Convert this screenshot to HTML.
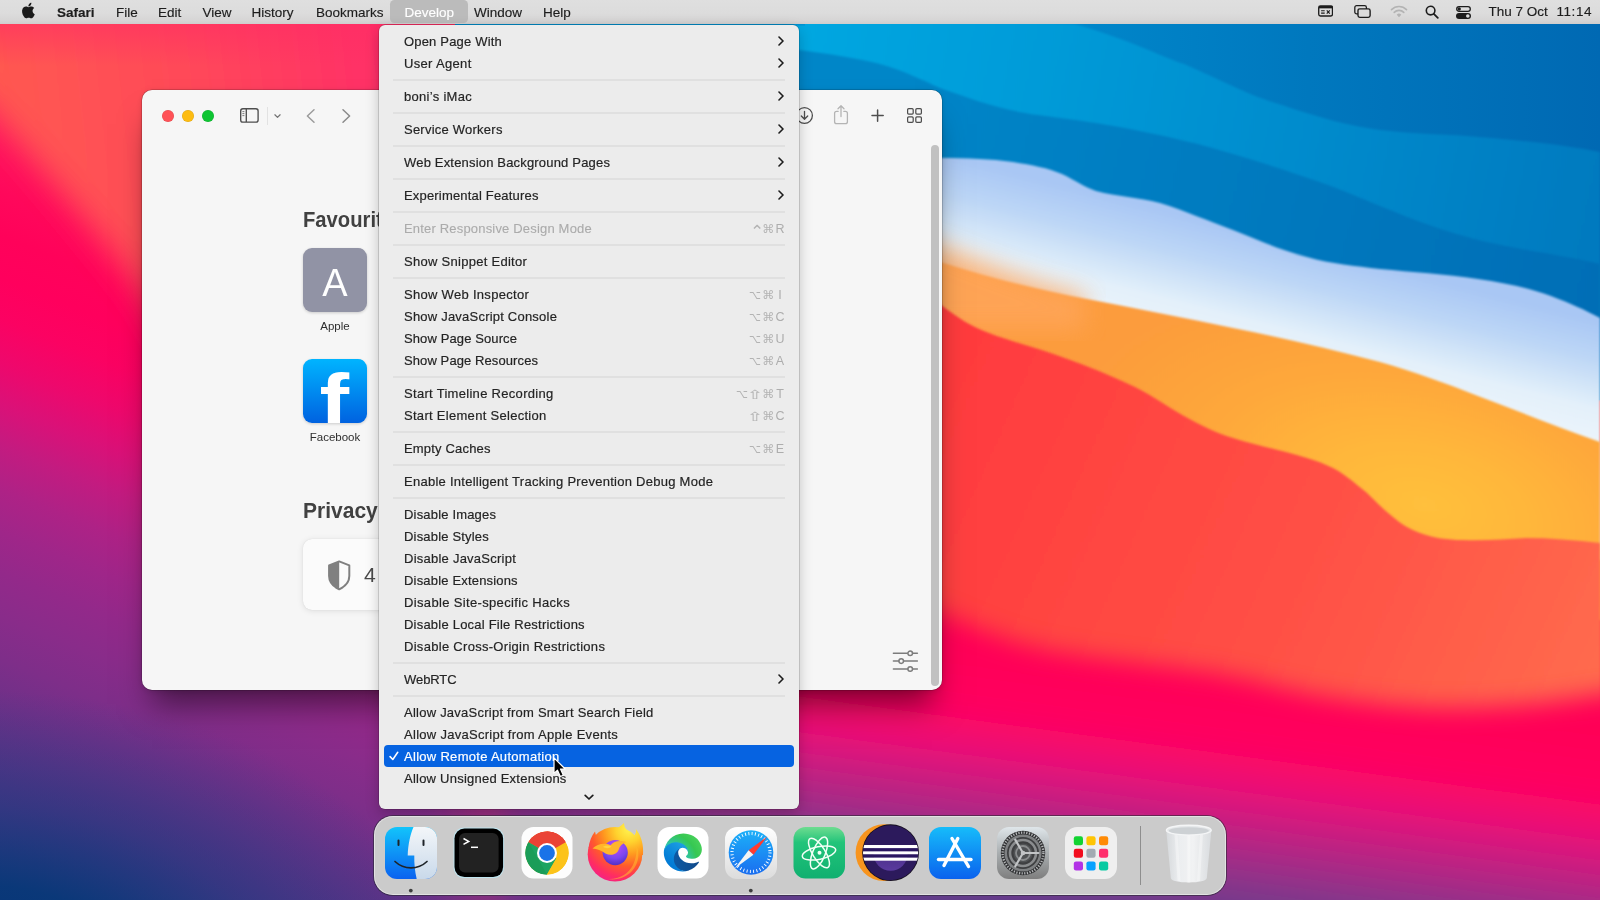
<!DOCTYPE html>
<html lang="en">
<head>
<meta charset="utf-8">
<title>Safari — Develop menu</title>
<style>
*{box-sizing:border-box;margin:0;padding:0}
html,body{width:1600px;height:900px;overflow:hidden;background:#ff3050}
body{position:relative;font-family:"Liberation Sans",sans-serif;font-size:13px;color:#262626;-webkit-font-smoothing:antialiased}
#wall{position:absolute;left:0;top:0;width:1600px;height:900px;display:block}
/* ---------- menu bar ---------- */
#menubar{will-change:transform;position:absolute;left:0;top:0;width:1600px;height:24px;background:linear-gradient(#dfdfdf 0,#dcdcdc 55%,#d6d5d5 85%,#cfcdcd 100%);}
#menubar .mi{position:absolute;top:0;height:24px;line-height:25.5px;font-size:13.5px;color:#1d1d1d;white-space:nowrap;-webkit-text-stroke:.15px #1d1d1d}
#menubar .mi.b{font-weight:bold}
#menubar .hl{position:absolute;left:390px;top:0;width:78px;height:23.4px;background:#bbbbbb;border-radius:4.5px}
#menubar svg{position:absolute}
/* ---------- safari window ---------- */
#win{will-change:transform;position:absolute;left:142px;top:90px;width:800px;height:600px;background:#f6f6f6;border-radius:10px;box-shadow:0 0 0 0.5px rgba(0,0,0,.30),0 24px 30px -10px rgba(0,0,0,.5),0 1px 7px rgba(0,0,0,.13);overflow:hidden}
#win .tl{position:absolute;top:20px;width:12px;height:12px;border-radius:50%}
#win svg{position:absolute}
#win h2{position:absolute;left:161px;font-size:22.6px;line-height:28px;font-weight:bold;color:#414141;white-space:nowrap;transform:scaleX(.895);transform-origin:0 50%}
#win .lbl{position:absolute;font-size:11.5px;color:#2e2e2e;text-align:center;width:90px;white-space:nowrap}
/* ---------- develop menu ---------- */
#menu{will-change:transform;position:absolute;left:379px;top:25px;width:420px;height:784px;background:#ececec;border-radius:6px;box-shadow:0 0 0 0.5px rgba(0,0,0,.28),0 5px 14px rgba(0,0,0,.22);padding-top:5px}
#menu .it{position:relative;height:22px;line-height:24.2px;padding-left:25px;font-size:13px;color:#242424;-webkit-text-stroke:.18px #242424;white-space:nowrap;letter-spacing:.18px}
#menu .it.dis{color:#ababab;-webkit-text-stroke:.1px #ababab}
#menu .it .sc{position:absolute;right:14px;top:0;height:22px;line-height:25.4px;color:#adadad;font-size:12.5px;white-space:nowrap;display:flex;letter-spacing:0;-webkit-text-stroke:0}
#menu .it .sc i{display:block;width:13.5px;text-align:center;font-style:normal;font-family:"DejaVu Sans",sans-serif;font-size:12px;color:#b3b3b3}
#menu .it .sc i.o{transform:scaleX(.86)}
#menu .it .sc i.s{transform:scaleX(1.6);font-size:12.5px}
#menu .it .sc i.c{font-size:17px;line-height:29px;transform:translateX(2px)}
#menu .it .sc b{display:block;width:10px;text-align:center;font-weight:normal;font-size:12.5px}
#menu .it .ar{position:absolute;right:15px;top:6px;width:6px;height:10px}
#menu .ck{position:absolute;left:4.6px;top:6.2px;width:10px;height:10px}
#menu .more{position:absolute;left:204.5px;top:768.5px;width:10px;height:7px}
#menu .sep{height:11px;position:relative}
#menu .sep:after{content:"";position:absolute;left:14px;right:14px;top:5px;height:2px;background:#e0e0e0}
#menu .it.sel{background:#0663e1;color:#fff;-webkit-text-stroke:.18px #fff;margin:0 5px;padding-left:20px;border-radius:4px}
/* ---------- dock ---------- */
#dock{position:absolute;left:374px;top:816px;width:852px;height:79px;background:#cbcbcb;border-radius:19px;box-shadow:0 0 0 1px rgba(40,40,50,.6), inset 0 0 0 1px rgba(255,255,255,.45)}
</style>
</head>
<body>
<svg id="wall" viewBox="0 0 1600 900" width="1600" height="900" preserveAspectRatio="none">
<defs>
  <linearGradient id="gBlueBack" gradientUnits="userSpaceOnUse" x1="560" y1="0" x2="1600" y2="0">
    <stop offset="0" stop-color="#0096d6"/><stop offset=".5" stop-color="#0086ca"/><stop offset=".72" stop-color="#0078be"/><stop offset="1" stop-color="#0069b3"/>
  </linearGradient>
  <linearGradient id="gBlueA" gradientUnits="userSpaceOnUse" x1="800" y1="40" x2="1600" y2="200">
    <stop offset="0" stop-color="#00a7e1"/><stop offset=".3" stop-color="#009bd8"/><stop offset=".62" stop-color="#008ccd"/><stop offset="1" stop-color="#007abf"/>
  </linearGradient>
  <linearGradient id="gBlueC" gradientUnits="userSpaceOnUse" x1="900" y1="110" x2="1600" y2="290">
    <stop offset="0" stop-color="#0086c8"/><stop offset=".55" stop-color="#0079be"/><stop offset="1" stop-color="#006eb6"/>
  </linearGradient>
  <linearGradient id="gWhite" gradientUnits="userSpaceOnUse" x1="1270" y1="238" x2="1240" y2="356">
    <stop offset="0" stop-color="#a9c7f4"/><stop offset=".3" stop-color="#bcd6f6"/><stop offset=".7" stop-color="#e3f0fa"/><stop offset="1" stop-color="#ecf5fb"/>
  </linearGradient>
  <radialGradient id="gOrange" gradientUnits="userSpaceOnUse" cx="1425" cy="505" r="370" gradientTransform="translate(1425 505) rotate(14) scale(1 .55) rotate(-14) translate(-1425 -505)">
    <stop offset="0" stop-color="#ffc03c"/><stop offset=".3" stop-color="#ffb63a"/><stop offset=".6" stop-color="#fea83a"/><stop offset="1" stop-color="#fc9c3c"/>
  </radialGradient>
  <linearGradient id="gRed" gradientUnits="userSpaceOnUse" x1="0" y1="300" x2="0" y2="900">
    <stop offset="0" stop-color="#ff3d3e"/>
    <stop offset=".25" stop-color="#ff4842"/>
    <stop offset=".5" stop-color="#ff5046"/>
    <stop offset=".68" stop-color="#ff4c46"/>
    <stop offset="1" stop-color="#ff2a4c"/>
  </linearGradient>
  <linearGradient id="gRed2" gradientUnits="userSpaceOnUse" x1="940" y1="360" x2="1600" y2="650">
    <stop offset="0" stop-color="#ff3a3e"/><stop offset=".3" stop-color="#ff4642"/><stop offset=".62" stop-color="#ff5246"/><stop offset="1" stop-color="#ff6a4e"/>
  </linearGradient>
  <linearGradient id="gPink" gradientUnits="userSpaceOnUse" x1="1000" y1="600" x2="959.5" y2="900"><stop offset="0.000" stop-color="#ff0654"/><stop offset="0.040" stop-color="#ff0655"/><stop offset="0.083" stop-color="#ff0555"/><stop offset="0.125" stop-color="#ff0556"/><stop offset="0.165" stop-color="#ff0457"/><stop offset="0.208" stop-color="#ff0458"/><stop offset="0.250" stop-color="#ff045a"/><stop offset="0.290" stop-color="#ff045c"/><stop offset="0.333" stop-color="#ff045e"/><stop offset="0.375" stop-color="#fd0561"/><stop offset="0.415" stop-color="#f90767"/><stop offset="0.458" stop-color="#f20b6f"/><stop offset="0.500" stop-color="#ea0f76"/><stop offset="0.540" stop-color="#e1137b"/><stop offset="0.583" stop-color="#d4187e"/><stop offset="0.625" stop-color="#c81e80"/><stop offset="0.665" stop-color="#bb2383"/><stop offset="0.708" stop-color="#ae2885"/><stop offset="0.750" stop-color="#a02d87"/><stop offset="0.790" stop-color="#933189"/><stop offset="0.833" stop-color="#85368a"/><stop offset="0.875" stop-color="#79398b"/><stop offset="0.915" stop-color="#703b8b"/><stop offset="0.958" stop-color="#673b8b"/><stop offset="1.000" stop-color="#603c8a"/></linearGradient>
  <linearGradient id="gLeft" gradientUnits="userSpaceOnUse" x1="0" y1="24" x2="-350" y2="900"><stop offset="0.000" stop-color="#ff2c65"/><stop offset="0.040" stop-color="#ff2563"/><stop offset="0.083" stop-color="#ff1b60"/><stop offset="0.125" stop-color="#ff115d"/><stop offset="0.165" stop-color="#ff085b"/><stop offset="0.208" stop-color="#ff025a"/><stop offset="0.250" stop-color="#ff005d"/><stop offset="0.290" stop-color="#fb0262"/><stop offset="0.333" stop-color="#ee086c"/><stop offset="0.375" stop-color="#da1178"/><stop offset="0.415" stop-color="#c31b80"/><stop offset="0.458" stop-color="#ae2286"/><stop offset="0.500" stop-color="#9f2689"/><stop offset="0.540" stop-color="#93298a"/><stop offset="0.583" stop-color="#892c8a"/><stop offset="0.625" stop-color="#7e2e89"/><stop offset="0.665" stop-color="#703088"/><stop offset="0.708" stop-color="#613287"/><stop offset="0.750" stop-color="#533386"/><stop offset="0.790" stop-color="#463585"/><stop offset="0.833" stop-color="#383783"/><stop offset="0.875" stop-color="#2d3882"/><stop offset="0.915" stop-color="#263980"/><stop offset="0.958" stop-color="#20397f"/><stop offset="1.000" stop-color="#1b3a7e"/></linearGradient>
  <radialGradient id="gNavy" gradientUnits="userSpaceOnUse" cx="-25" cy="990" r="300" gradientTransform="translate(-25 990) scale(1.6 1) translate(25 -990)">
    <stop offset="0" stop-color="#003274"/><stop offset=".35" stop-color="#083878" stop-opacity=".95"/><stop offset=".62" stop-color="#1c3a7e" stop-opacity=".5"/><stop offset="1" stop-color="#2a3c84" stop-opacity="0"/>
  </radialGradient>
  <linearGradient id="gCoral" gradientUnits="userSpaceOnUse" x1="0" y1="60" x2="380" y2="20">
    <stop offset="0" stop-color="#ff5850"/><stop offset=".45" stop-color="#ff4a58"/><stop offset="1" stop-color="#ff2e68"/>
  </linearGradient>
  <linearGradient id="gTopPink" gradientUnits="userSpaceOnUse" x1="0" y1="22" x2="0" y2="66">
    <stop offset="0" stop-color="#ff2c64" stop-opacity=".6"/><stop offset="1" stop-color="#ff2c64" stop-opacity="0"/>
  </linearGradient>
  <linearGradient id="gFade" gradientUnits="userSpaceOnUse" x1="430" y1="0" x2="780" y2="0">
    <stop offset="0" stop-color="#fff"/><stop offset="1" stop-color="#000"/>
  </linearGradient>
  <mask id="mLeft" maskUnits="userSpaceOnUse" x="0" y="0" width="1600" height="900"><rect x="0" y="0" width="1600" height="900" fill="url(#gFade)"/></mask>
  <filter id="b2" x="-5%" y="-5%" width="110%" height="110%"><feGaussianBlur stdDeviation="1"/></filter>
  <filter id="b12" x="-10%" y="-10%" width="120%" height="120%"><feGaussianBlur stdDeviation="12"/></filter>
  <filter id="b16" x="-10%" y="-10%" width="120%" height="120%"><feGaussianBlur stdDeviation="16"/></filter>
  <filter id="b25" x="-20%" y="-20%" width="140%" height="140%"><feGaussianBlur stdDeviation="25"/></filter>
</defs>
<rect x="0" y="0" width="1600" height="900" fill="url(#gRed)"/>
<!-- blue stack -->
<path d="M560,0 H1600 V400 H560 Z" fill="url(#gBlueBack)"/>
<path d="M560,0 L1075,24 C1130,40 1160,56 1184,64 C1225,82 1250,96 1282,105 C1320,118 1350,126 1380,130 C1420,135 1450,134 1478,137 C1530,141 1570,146 1600,152 V400 H560 Z" fill="url(#gBlueA)" filter="url(#b2)"/>
<path d="M560,40 L700,42 C740,44 770,46 799,50 C830,54 855,58 880,64 C905,71 922,80 940,88 C975,100 1000,110 1038,115 C1075,120 1100,123 1135,130 C1170,137 1200,144 1233,154 C1270,165 1300,175 1331,186 C1365,199 1395,213 1429,225 C1465,238 1495,244 1527,250 C1555,255 1580,259 1600,264 V400 H560 Z" fill="url(#gBlueC)" filter="url(#b2)"/>
<!-- white band -->
<path d="M560,150 L940,158 C970,158 990,159 1013,162 C1032,165 1048,168 1062,174 C1075,180 1084,187 1096,191 C1118,197 1138,197 1160,203 C1186,211 1208,221 1233,230 C1258,240 1280,250 1307,257 C1332,264 1355,266 1380,269 C1412,272 1445,274 1478,279 C1505,283 1530,288 1551,296 C1570,303 1585,310 1600,318 V560 H560 Z" fill="url(#gWhite)" filter="url(#b2)"/>
<!-- orange band -->
<path d="M560,160 L940,262 C990,278 1040,290 1087,299 C1135,308 1185,318 1233,328 C1283,338 1330,349 1380,362 C1415,372 1445,383 1478,396 C1520,412 1560,428 1600,442 V620 H560 Z" fill="url(#gOrange)" filter="url(#b2)"/>
<!-- soft blurry top-left of orange -->
<path d="M880,225 L940,246 C990,266 1030,282 1085,296 L1085,330 L880,330 Z" fill="#ffa65c" opacity=".8" filter="url(#b12)"/>
<!-- red band -->
<path d="M560,280 L940,304 C955,316 970,326 989,333 C1012,342 1038,348 1062,357 C1088,366 1112,376 1135,387 C1153,396 1168,407 1184,416 C1200,425 1216,433 1233,438 C1258,446 1282,450 1307,458 C1320,462 1330,466 1340,472 C1352,480 1358,486 1366,492 C1376,502 1384,510 1393,517 C1402,525 1410,529 1420,533 C1434,538 1448,540 1462,540 C1485,541 1505,539 1526,538 C1550,538 1575,540 1600,543 V900 H560 Z" fill="url(#gRed2)" filter="url(#b2)"/>

<!-- pink lower region with curved soft top edge -->
<path d="M500,540 L940,612 C980,630 1010,642 1047,650 C1100,660 1150,664 1207,672 C1245,678 1280,688 1313,695 C1365,704 1420,710 1473,708 C1520,706 1560,702 1600,694 L1700,690 V1000 H500 Z" fill="url(#gPink)" filter="url(#b12)"/>
<!-- left overlay (fades out between x=430 and x=780) -->
<g mask="url(#mLeft)">
  <rect x="0" y="0" width="800" height="900" fill="url(#gLeft)"/>
  <g filter="url(#b16)">
    <path d="M-40,-40 L900,-40 L900,420 L215,420 C190,380 165,330 142,292 C100,236 50,176 0,120 L-40,75 Z" fill="url(#gCoral)"/>
  </g>
  <rect x="0" y="400" width="800" height="500" fill="url(#gNavy)"/>
  <rect x="0" y="20" width="800" height="50" fill="url(#gTopPink)"/>
</g>
<rect x="455" y="22" width="350" height="3.5" fill="#0093d3"/>
</svg>

<div id="menubar">
  <svg style="left:20.2px;top:1.4px" width="17.9" height="19" viewBox="0 0 16 17"><path fill="#1a1a1a" d="M11.2 8.9c0-1.7 1.4-2.5 1.5-2.6-.8-1.2-2.1-1.4-2.5-1.4-1.1-.1-2.1.6-2.6.6-.6 0-1.4-.6-2.3-.6-1.2 0-2.3.7-2.9 1.8-1.2 2.1-.3 5.3.9 7 .6.9 1.3 1.8 2.2 1.8.9 0 1.2-.6 2.3-.6 1 0 1.3.6 2.3.6.9 0 1.5-.9 2.1-1.7.7-1 .9-1.9 1-2-.1 0-1.9-.7-2-2.900zM9.5 3.800c.5-.6.8-1.4.7-2.2-.7 0-1.5.5-2 1.1-.4.5-.8 1.3-.7 2.1.8.1 1.5-.4 2-1z"/></svg>
  <span class="mi b" style="left:57px">Safari</span>
  <span class="mi" style="left:116px">File</span>
  <span class="mi" style="left:158px">Edit</span>
  <span class="mi" style="left:202.500px">View</span>
  <span class="mi" style="left:251.500px">History</span>
  <span class="mi" style="left:316px">Bookmarks</span>
  <div class="hl"></div>
  <span class="mi" style="left:404.5px;color:#fff;-webkit-text-stroke-color:#fff">Develop</span>
  <span class="mi" style="left:474px">Window</span>
  <span class="mi" style="left:543px">Help</span>
  <!-- status icons -->
  <svg style="left:1318px;top:5px" width="15.2" height="11.9" viewBox="0 0 17 13"><rect x=".8" y=".8" width="15.4" height="11.4" rx="2" fill="none" stroke="#1c1c1c" stroke-width="1.5"/><rect x="1" y="1" width="15" height="2.6" fill="#1c1c1c"/><path d="M3.5 6.300h4M3.5 8.900h4" stroke="#1c1c1c" stroke-width="1.3"/><path d="M9.8 5.800l3.4 3.600M13.2 5.800l-3.4 3.6" stroke="#1c1c1c" stroke-width="1.3"/></svg>
  <svg style="left:1354px;top:5.4px" width="17.4" height="13.6" viewBox="0 0 19 15"><rect x=".8" y=".8" width="12.8" height="9" rx="2" fill="none" stroke="#1c1c1c" stroke-width="1.4"/><rect x="4.3" y="4.3" width="13.4" height="9.4" rx="2" fill="#dcdcdc" stroke="#1c1c1c" stroke-width="1.5"/></svg>
  <svg style="left:1390px;top:5px" width="18" height="13" viewBox="0 0 18 13"><g fill="none" stroke="#b3b3b3" stroke-width="1.6" stroke-linecap="round"><path d="M1.5 4.600a10.6 10.6 0 0 1 15 0"/><path d="M4.2 7.400a6.8 6.8 0 0 1 9.6 0"/></g><path d="M9 12.300l-2.3-2.500a3.2 3.2 0 0 1 4.6 0z" fill="#b3b3b3"/></svg>
  <svg style="left:1425px;top:5px" width="14" height="14" viewBox="0 0 14 14"><circle cx="5.6" cy="5.6" r="4.3" fill="none" stroke="#1c1c1c" stroke-width="1.6"/><path d="M8.8 8.800l4 4" stroke="#1c1c1c" stroke-width="1.8" stroke-linecap="round"/></svg>
  <svg style="left:1456px;top:6px" width="15" height="13" viewBox="0 0 15 13"><rect x=".7" y=".7" width="13.6" height="4.6" rx="2.3" fill="none" stroke="#1c1c1c" stroke-width="1.3"/><circle cx="3.2" cy="3" r="1.7" fill="#1c1c1c"/><rect x="0" y="7" width="15" height="6" rx="3" fill="#1c1c1c"/><circle cx="11.8" cy="10" r="1.8" fill="#dcdcdc"/></svg>
  <span class="mi" style="left:1488.5px;line-height:23.6px">Thu 7 Oct</span>
  <span class="mi" style="left:1556.5px;letter-spacing:.55px;line-height:23.6px">11:14</span>
</div>

<div id="win">
  <div class="tl" style="left:20px;background:#ff5257;box-shadow:inset 0 0 0 .5px rgba(0,0,0,.12)"></div>
  <div class="tl" style="left:40px;background:#fdbc12;box-shadow:inset 0 0 0 .5px rgba(0,0,0,.12)"></div>
  <div class="tl" style="left:60px;background:#0fc533;box-shadow:inset 0 0 0 .5px rgba(0,0,0,.12)"></div>
  <!-- sidebar toggle -->
  <svg style="left:97px;top:17px" width="21" height="17" viewBox="0 0 21 17"><rect x="1.7" y="1.7" width="17.4" height="13.4" rx="2.2" fill="none" stroke="#4e4e4e" stroke-width="1.35"/><path d="M7.3 1.700v13.4" stroke="#4e4e4e" stroke-width="1.35"/><path d="M3.4 4.600h2M3.4 6.600h2M3.4 8.600h2" stroke="#6e6e6e" stroke-width=".9"/></svg>
  <div style="position:absolute;left:125px;top:17px;width:1px;height:18px;background:#e2e2e2"></div>
  <svg style="left:131px;top:23px" width="9" height="7" viewBox="0 0 9 7"><path d="M1.9 1.800l2.600 2.600 2.600-2.600" fill="none" stroke="#747474" stroke-width="1.25" stroke-linecap="round" stroke-linejoin="round"/></svg>
  <svg style="left:163px;top:18px" width="12" height="16" viewBox="0 0 12 16"><path d="M9 1.800L2.4 8 9 14.2" fill="none" stroke="#9b9b9b" stroke-width="1.5" stroke-linecap="round" stroke-linejoin="round"/></svg>
  <svg style="left:198px;top:18px" width="12" height="16" viewBox="0 0 12 16"><path d="M3 1.800L9.6 8 3 14.2" fill="none" stroke="#8a8a8a" stroke-width="1.5" stroke-linecap="round" stroke-linejoin="round"/></svg>
  <!-- right toolbar -->
  <svg style="left:653px;top:16px" width="19" height="19" viewBox="0 0 19 19"><circle cx="9.5" cy="9.5" r="7.9" fill="none" stroke="#4e4e4e" stroke-width="1.3"/><path d="M9.5 5.300v7.600M6.3 10l3.2 3.2 3.2-3.2" fill="none" stroke="#4e4e4e" stroke-width="1.3" stroke-linecap="round" stroke-linejoin="round"/></svg>
  <svg style="left:691px;top:14px" width="16" height="21" viewBox="0 0 16 21"><path d="M5.2 7.300H3.600a2 2 0 0 0-2 2v8.400a2 2 0 0 0 2 2h8.800a2 2 0 0 0 2-2V9.300a2 2 0 0 0-2-2h-1.6" fill="none" stroke="#b4b4b4" stroke-width="1.3" stroke-linecap="round"/><path d="M8 12.600V2M5 4.800l3-3 3 3" fill="none" stroke="#b4b4b4" stroke-width="1.3" stroke-linecap="round" stroke-linejoin="round"/></svg>
  <svg style="left:728px;top:18px" width="15" height="15" viewBox="0 0 15 15"><path d="M7.6 2v11.2M2 7.6h11.2" stroke="#4e4e4e" stroke-width="1.5" stroke-linecap="round"/></svg>
  <svg style="left:764px;top:17px" width="17" height="17" viewBox="0 0 17 17"><g fill="none" stroke="#4e4e4e" stroke-width="1.25"><rect x="1.6" y="1.6" width="5.6" height="5.6" rx="1.1"/><rect x="9.8" y="1.6" width="5.6" height="5.6" rx="1.1"/><rect x="1.6" y="9.8" width="5.6" height="5.6" rx="1.1"/><rect x="9.8" y="9.8" width="5.6" height="5.6" rx="1.1"/></g></svg>
  <!-- content -->
  <h2 style="top:116px">Favourites</h2>
  <div style="position:absolute;left:161px;top:158px;width:64px;height:64px;border-radius:9px;background:#9193a5;color:#fff;font-size:38px;line-height:70px;text-align:center;box-shadow:0 1px 3px rgba(0,0,0,.18)">A</div>
  <div class="lbl" style="left:148px;top:229.6px">Apple</div>
  <div style="position:absolute;left:161px;top:269px;width:64px;height:64px;border-radius:9px;background:linear-gradient(#00b4ff,#0062e0);overflow:hidden;box-shadow:0 1px 3px rgba(0,0,0,.18)"><span style="position:absolute;left:15px;top:-1.5px;width:36px;text-align:center;color:#fff;font-weight:bold;font-size:76px;line-height:86px;transform:scaleX(1.17);transform-origin:78% 50%">f</span></div>
  <div class="lbl" style="left:148px;top:340.6px">Facebook</div>
  <h2 style="top:407px;transform:scaleX(.93)">Privacy Report</h2>
  <div style="position:absolute;left:161px;top:449px;width:478px;height:71px;border-radius:9px;background:#fbfbfb;box-shadow:0 1px 6px rgba(0,0,0,.10),0 0 1px rgba(0,0,0,.12)">
    <svg style="left:22.5px;top:20px" width="26.4" height="33" viewBox="0 0 24 30"><path d="M12 2.200l9.2 3.600v9.600c0 6-4.2 9.8-9.2 12.200C7 25.2 2.8 21.4 2.8 15.400V5.800z" fill="none" stroke="#808080" stroke-width="1.8" stroke-linejoin="round"/><path d="M12 2.200L2.8 5.800v9.600c0 6 4.2 9.8 9.2 12.200z" fill="#808080"/></svg>
    <span style="position:absolute;left:60.5px;top:14px;font-size:20px;line-height:45px;color:#4a4a4a;transform:scaleX(1.06);transform-origin:0 50%">4</span>
  </div>
  <!-- settings -->
  <svg style="left:749px;top:558px" width="29" height="26" viewBox="0 0 29 26"><g stroke="#7c7c7c" stroke-width="1.5" fill="#f6f6f6" stroke-linecap="round"><path d="M2.4 5.300h24M2.4 13.100h24M2.4 21h24"/><circle cx="19.2" cy="5.3" r="2.3"/><circle cx="10.2" cy="13.1" r="2.3"/><circle cx="19.2" cy="21" r="2.3"/></g></svg>
  <!-- scrollbar -->
  <div style="position:absolute;left:789px;top:55px;width:8px;height:541px;border-radius:4px;background:#c1c1c1"></div>
</div>

<div id="menu">
<div class="it">Open Page With<svg class="ar" viewBox="0 0 6 10"><path d="M1 1l4 4-4 4" fill="none" stroke="#1c1c1c" stroke-width="1.6" stroke-linecap="round" stroke-linejoin="round"/></svg></div>
<div class="it" style="letter-spacing:0.330px">User Agent<svg class="ar" viewBox="0 0 6 10"><path d="M1 1l4 4-4 4" fill="none" stroke="#1c1c1c" stroke-width="1.6" stroke-linecap="round" stroke-linejoin="round"/></svg></div>
<div class="sep"></div>
<div class="it" style="letter-spacing:0.298px">boni’s iMac<svg class="ar" viewBox="0 0 6 10"><path d="M1 1l4 4-4 4" fill="none" stroke="#1c1c1c" stroke-width="1.6" stroke-linecap="round" stroke-linejoin="round"/></svg></div>
<div class="sep"></div>
<div class="it" style="letter-spacing:0.233px">Service Workers<svg class="ar" viewBox="0 0 6 10"><path d="M1 1l4 4-4 4" fill="none" stroke="#1c1c1c" stroke-width="1.6" stroke-linecap="round" stroke-linejoin="round"/></svg></div>
<div class="sep"></div>
<div class="it">Web Extension Background Pages<svg class="ar" viewBox="0 0 6 10"><path d="M1 1l4 4-4 4" fill="none" stroke="#1c1c1c" stroke-width="1.6" stroke-linecap="round" stroke-linejoin="round"/></svg></div>
<div class="sep"></div>
<div class="it">Experimental Features<svg class="ar" viewBox="0 0 6 10"><path d="M1 1l4 4-4 4" fill="none" stroke="#1c1c1c" stroke-width="1.6" stroke-linecap="round" stroke-linejoin="round"/></svg></div>
<div class="sep"></div>
<div class="it dis">Enter Responsive Design Mode<span class="sc"><i class="c">⌃</i><i>⌘</i><b>R</b></span></div>
<div class="sep"></div>
<div class="it" style="letter-spacing:0.280px">Show Snippet Editor</div>
<div class="sep"></div>
<div class="it" style="letter-spacing:0.297px">Show Web Inspector<span class="sc"><i class="o">⌥</i><i>⌘</i><b>I</b></span></div>
<div class="it" style="letter-spacing:0.215px">Show JavaScript Console<span class="sc"><i class="o">⌥</i><i>⌘</i><b>C</b></span></div>
<div class="it" style="letter-spacing:0.111px">Show Page Source<span class="sc"><i class="o">⌥</i><i>⌘</i><b>U</b></span></div>
<div class="it" style="letter-spacing:0.096px">Show Page Resources<span class="sc"><i class="o">⌥</i><i>⌘</i><b>A</b></span></div>
<div class="sep"></div>
<div class="it" style="letter-spacing:0.301px">Start Timeline Recording<span class="sc"><i class="o">⌥</i><i class="s">⇧</i><i>⌘</i><b>T</b></span></div>
<div class="it" style="letter-spacing:0.293px">Start Element Selection<span class="sc"><i class="s">⇧</i><i>⌘</i><b>C</b></span></div>
<div class="sep"></div>
<div class="it">Empty Caches<span class="sc"><i class="o">⌥</i><i>⌘</i><b>E</b></span></div>
<div class="sep"></div>
<div class="it" style="letter-spacing:0.262px">Enable Intelligent Tracking Prevention Debug Mode</div>
<div class="sep"></div>
<div class="it">Disable Images</div>
<div class="it">Disable Styles</div>
<div class="it" style="letter-spacing:0.241px">Disable JavaScript</div>
<div class="it">Disable Extensions</div>
<div class="it" style="letter-spacing:0.343px">Disable Site-specific Hacks</div>
<div class="it" style="letter-spacing:0.215px">Disable Local File Restrictions</div>
<div class="it" style="letter-spacing:0.295px">Disable Cross-Origin Restrictions</div>
<div class="sep"></div>
<div class="it" style="letter-spacing:-0.070px">WebRTC<svg class="ar" viewBox="0 0 6 10"><path d="M1 1l4 4-4 4" fill="none" stroke="#1c1c1c" stroke-width="1.6" stroke-linecap="round" stroke-linejoin="round"/></svg></div>
<div class="sep"></div>
<div class="it" style="letter-spacing:0.242px">Allow JavaScript from Smart Search Field</div>
<div class="it" style="letter-spacing:0.283px">Allow JavaScript from Apple Events</div>
<div class="it sel" style="letter-spacing:0.293px">Allow Remote Automation<svg class="ck" viewBox="0 0 11 11"><path d="M1.2 6.2l3 3.2L9.6 1.4" fill="none" stroke="#fff" stroke-width="1.7" stroke-linecap="round" stroke-linejoin="round"/></svg></div>
<div class="it" style="letter-spacing:0.232px">Allow Unsigned Extensions</div>
<svg class="more" viewBox="0 0 10 7"><path d="M1.2 1.4l3.8 3.6 3.8-3.600" fill="none" stroke="#1c1c1c" stroke-width="1.7" stroke-linecap="round" stroke-linejoin="round"/></svg>
</div>

<div id="dock">
<svg width="852" height="79" viewBox="374 816 852 79" style="position:absolute;left:0;top:0">
<defs>
  <linearGradient id="dFinL" x1="0" y1="0" x2="0" y2="1"><stop offset="0" stop-color="#12c4fb"/><stop offset="1" stop-color="#0a62f0"/></linearGradient>
  <linearGradient id="dFinR" x1="0" y1="0" x2="0" y2="1"><stop offset="0" stop-color="#f3f6f9"/><stop offset="1" stop-color="#c9d9ea"/></linearGradient>
  <clipPath id="cFin"><rect x="385" y="827" width="52" height="52" rx="12"/></clipPath>
  <radialGradient id="dFox" gradientUnits="userSpaceOnUse" cx="629" cy="829" r="60"><stop offset="0" stop-color="#fff44f"/><stop offset=".22" stop-color="#ffd22e"/><stop offset=".42" stop-color="#ff9a1f"/><stop offset=".62" stop-color="#ff5a2c"/><stop offset=".82" stop-color="#ff2d62"/><stop offset="1" stop-color="#f01c94"/></radialGradient>
  <radialGradient id="dFoxG" cx=".5" cy=".25" r=".8"><stop offset="0" stop-color="#c04cf6"/><stop offset=".6" stop-color="#7a46ee"/><stop offset="1" stop-color="#4a2cc0"/></radialGradient>
  <linearGradient id="dEdge1" x1="0" y1="0" x2="1" y2="1"><stop offset="0" stop-color="#1fa8e0"/><stop offset="1" stop-color="#0a58b0"/></linearGradient>
  <linearGradient id="dEdge2" x1="0" y1="1" x2="1" y2="0"><stop offset="0" stop-color="#18b4e8"/><stop offset=".6" stop-color="#22c890"/><stop offset="1" stop-color="#48dc58"/></linearGradient>
  <linearGradient id="dSaf" x1="0" y1="0" x2="0" y2="1"><stop offset="0" stop-color="#1cb0f8"/><stop offset="1" stop-color="#1a6ef0"/></linearGradient>
  <linearGradient id="dSafT" x1="0" y1="0" x2="0" y2="1"><stop offset="0" stop-color="#ffffff"/><stop offset="1" stop-color="#dcdcdc"/></linearGradient>
  <linearGradient id="dAtom" x1="0" y1="0" x2="0" y2="1"><stop offset="0" stop-color="#6edc90"/><stop offset=".3" stop-color="#22c47a"/><stop offset="1" stop-color="#10b070"/></linearGradient>
  <linearGradient id="dApp" x1="0" y1="0" x2="0" y2="1"><stop offset="0" stop-color="#16bcfa"/><stop offset="1" stop-color="#0a62ee"/></linearGradient>
  <linearGradient id="dSet" x1="0" y1="0" x2="0" y2="1"><stop offset="0" stop-color="#dfe6ea"/><stop offset=".5" stop-color="#a9aeb0"/><stop offset="1" stop-color="#7e7e7e"/></linearGradient>
  <linearGradient id="dTrash" x1="0" y1="0" x2="1" y2="0"><stop offset="0" stop-color="#d6d9dc"/><stop offset=".3" stop-color="#eceef0"/><stop offset=".6" stop-color="#f1f2f3"/><stop offset="1" stop-color="#d9dcdf"/></linearGradient>
  <radialGradient id="dEcl" cx=".5" cy=".85" r=".5"><stop offset="0" stop-color="#5a3a9a"/><stop offset=".7" stop-color="#4a2c86"/><stop offset=".72" stop-color="#2c1a5c"/><stop offset="1" stop-color="#2c1a5c"/></radialGradient>
  <clipPath id="cEcl"><circle cx="890.6" cy="852.7" r="27.6"/></clipPath>
  <linearGradient id="dEdgeA" gradientUnits="userSpaceOnUse" x1="60" y1="177" x2="237" y2="177"><stop offset="0" stop-color="#0c59a4"/><stop offset="1" stop-color="#114a8b"/></linearGradient>
  <linearGradient id="dEdgeB" gradientUnits="userSpaceOnUse" x1="150" y1="100" x2="40" y2="240"><stop offset="0" stop-color="#1b9de2"/><stop offset=".16" stop-color="#1595df"/><stop offset=".67" stop-color="#0680d7"/><stop offset="1" stop-color="#0078d4"/></linearGradient>
  <radialGradient id="dEdgeC" gradientUnits="userSpaceOnUse" cx="28" cy="200" r="300"><stop offset="0" stop-color="#35c1f1"/><stop offset=".11" stop-color="#34c1ed"/><stop offset=".23" stop-color="#2fc2df"/><stop offset=".31" stop-color="#2bc3d2"/><stop offset=".67" stop-color="#36c752"/><stop offset="1" stop-color="#54d860"/></radialGradient>
  <linearGradient id="dEclB" x1="0" y1="0" x2="0" y2="1"><stop offset="0" stop-color="#3c2474"/><stop offset="1" stop-color="#5a3a9e"/></linearGradient>
</defs>
<!-- Finder -->
<g clip-path="url(#cFin)">
  <rect x="385" y="827" width="52" height="52" fill="url(#dFinL)"/>
  <path d="M413.5 827c-3 7-5.4 17-5.8 28.500h6.600c-.2 8 .6 16 2.4 23.500H437V827z" fill="url(#dFinR)"/>
</g>
<path d="M398.5 840.500v4.500M423.5 840.500v4.5" stroke="#1e2328" stroke-width="2" stroke-linecap="round"/>
<path d="M395 861.500c9 8.5 23 8.5 32 0" fill="none" stroke="#1e2328" stroke-width="1.7" stroke-linecap="round"/>
<path d="M413.8 828c-3 7-5.6 17-6 27.600h6.500c-.2 8 .6 15.5 2.3 22.5" fill="none" stroke="#1e2328" stroke-width="0" />
<!-- Terminal -->
<rect x="453.5" y="827.5" width="50.6" height="50.6" rx="11" fill="#bfe4ee"/>
<rect x="454.5" y="828.5" width="48.6" height="48.6" rx="10" fill="#000"/>
<rect x="459" y="833" width="39.6" height="39.6" rx="6" fill="#222"/>
<path d="M463.5 838.500l5.2 2.9-5.2 2.9" fill="none" stroke="#fff" stroke-width="1.5"/><path d="M471 847.300h7" stroke="#fff" stroke-width="1.5"/>
<!-- Chrome -->
<rect x="521.5" y="827" width="51" height="51.5" rx="12" fill="#fdfdfd"/>
<g>
  <circle cx="547" cy="853" r="21.5" fill="#fbc116"/>
  <path d="M547 853L528.4 842.300A21.5 21.5 0 0 1 565.6 842.300z" fill="#ea4335"/>
  <path d="M547 831.500a21.5 21.5 0 0 1 18.6 10.800H547z" fill="#ea4335"/>
  <path d="M528.4 842.250A21.5 21.5 0 0 0 547 874.500L556.3 858.4 547 853z" fill="#1da462"/>
  <path d="M528.4 842.250L537.7 858.4 547 853z" fill="#1da462"/>
  <path d="M528.38 842.250A21.5 21.5 0 0 1 565.62 842.250L547 842.250z" fill="#ea4335"/>
  <path d="M528.38 842.250L539 860.65 547 874.500A21.5 21.5 0 0 1 528.38 842.250z" fill="#1a9d58"/>
  <path d="M547 874.500L556.5 858 565.62 842.250A21.5 21.5 0 0 1 547 874.500z" fill="#fcc31a"/>
  <circle cx="547" cy="853" r="10" fill="#fff"/><circle cx="547" cy="853" r="7.9" fill="#1a73e8"/>
</g>
<!-- Firefox -->
<g fill="url(#dFox)">
<circle cx="615" cy="854.2" r="27.3"/>
<path d="M611 838C611 831 618 828.5 624 823C624 829 629 832 633 836.500C636 834 636.5 831.5 635.8 829C641.5 836 643.8 845 643 855L615 855Z"/>
<path d="M588.5 848C589.5 841 591.5 836 595 831.500C595.8 835.5 597 838 599 840C601 837 604 835 607.5 834C606.5 837 606.5 839 607.5 841.500L608 852Z"/>
</g>
<circle cx="615.2" cy="852.6" r="12.6" fill="url(#dFoxG)"/>
<path d="M592.5 848.500C597.5 843.5 605 842.5 610.5 845.200C613.5 841 620 839.8 626.5 842C622.5 843.5 619.5 846 618.5 850C617 854.5 610.5 856 605.5 853.500C601.5 850.5 597 848.8 592.5 848.500Z" fill="#ffb52b"/>
<path d="M603 846.800C606 845 609 845 611.5 846.500C609.5 848.5 606 849 603 846.800Z" fill="#ffd23e"/>
<path d="M636.5 846C640 854 638.5 864 632 871C626 877.5 617 880.5 608 879C619 879.5 628.5 874 633 865C636 859 637 852 636.5 846Z" fill="#ffbd2e" opacity=".55"/>
<!-- Edge -->
<rect x="657.5" y="827" width="51" height="51.5" rx="12" fill="#fff"/>
<g transform="translate(663.8 833.4) scale(.1485)">
<path d="M231 190.500c-3.4 1.8-6.9 3.4-10.5 4.7-11.4 4.3-23.5 6.4-35.7 6.4-47 0-88-32.3-88-73.9.1-11.4 6.4-21.9 16.4-27.3-42.6 1.8-53.5 46.2-53.5 72.2 0 73.6 67.7 81 82.3 81 7.9 0 19.7-2.3 26.9-4.600l1.3-.4c27.4-9.5 50.7-28 66.2-52.5 1-1.7.5-3.9-1.2-4.9-1.2-.8-2.8-.8-4.2-.7z" fill="url(#dEdgeA)"/>
<path d="M105.7 241.400c-8.9-5.5-16.6-12.8-22.7-21.3-26.3-36-18.4-86.5 17.6-112.8 3.8-2.7 7.7-5.2 11.9-7.2 3.1-1.5 8.4-4.1 15.5-4 10.1.1 19.6 4.9 25.7 13 4 5.4 6.3 11.9 6.4 18.7 0-.2 24.5-79.6-80-79.6-43.9 0-80 41.6-80 78.2-.2 19.3 4 38.5 12.1 56 27.6 58.8 94.8 87.6 156.4 67.1-21.1 6.6-44.1 3.7-62.9-8.100z" fill="url(#dEdgeB)"/>
<path d="M152.3 148.900c-.8 1-3.3 2.5-3.3 5.7 0 2.6 1.7 5.2 4.8 7.3 14.4 10.1 41.7 8.7 41.8 8.7 10.7 0 21.2-2.9 30.4-8.3 18.8-11 30.4-31.1 30.4-52.9.3-22.4-8-37.3-11.3-43.900C225.9 24.2 180.3 0 130.7 0 60.9 0 4 56.1 3 125.900c.5-36.5 36.8-66 80-66 3.5 0 23.5.3 42 10 16.3 8.6 24.9 18.9 30.8 29.2 6.2 10.7 7.3 24.1 7.3 29.500s-2.7 13.3-7.8 19.900z" fill="url(#dEdgeC)"/>
</g>
<!-- Safari -->
<rect x="725" y="827" width="52" height="52" rx="12" fill="url(#dSafT)"/>
<circle cx="751" cy="852.5" r="22.3" fill="url(#dSaf)"/>
<circle cx="751" cy="852.5" r="19" fill="none" stroke="#fff" stroke-width="3.2" stroke-dasharray=".9 2.42"/>
<path d="M767.3 836.500L748.6 850.3 753.4 854.700z" fill="#ff3b30"/>
<path d="M734.7 868.500L748.6 850.3 753.4 854.700z" fill="#f4f4f4"/>
<!-- Atom -->
<rect x="793.5" y="827" width="51.5" height="51.5" rx="12" fill="url(#dAtom)"/>
<g fill="none" stroke="#f2fff6" stroke-width="1.5"><ellipse cx="819" cy="853" rx="17" ry="6.3" transform="rotate(-12 819 853)"/><ellipse cx="819" cy="853" rx="17" ry="6.3" transform="rotate(58 819 853)"/><ellipse cx="819" cy="853" rx="17" ry="6.3" transform="rotate(112 819 853)"/></g><circle cx="819.5" cy="852.8" r="2" fill="#f2fff6"/>
<!-- Eclipse -->
<circle cx="884" cy="852.7" r="28.4" fill="#f7941e"/>
<circle cx="890.6" cy="852.7" r="28.4" fill="#16101f"/>
<circle cx="890.6" cy="852.7" r="27.5" fill="#2c1a5c"/>
<g clip-path="url(#cEcl)">
<circle cx="890.6" cy="853.5" r="17.2" fill="url(#dEclB)"/>
<rect x="860" y="830" width="62" height="15" fill="#2c1a5c"/>
<rect x="860" y="845" width="62" height="3.3" fill="#fff"/><rect x="860" y="851.2" width="62" height="3.3" fill="#fff"/><rect x="860" y="857.4" width="62" height="3.3" fill="#fff"/><rect x="860" y="848.3" width="62" height="2.9" fill="#2a1660"/><rect x="860" y="854.5" width="62" height="2.9" fill="#2a1660"/>
</g>
<!-- App Store -->
<rect x="929" y="827" width="52" height="52" rx="12" fill="url(#dApp)"/>
<g stroke="#fff" stroke-width="3.4" stroke-linecap="round" fill="none"><path d="M957.8 838.500L944 865.5"/><path d="M952 838.500L968.5 866.5"/><path d="M938.5 859.500H971"/></g>
<path d="M951 856.500h10.500v6H951z" fill="url(#dApp)" opacity="0"/>
<!-- Settings -->
<rect x="997" y="827" width="52" height="52" rx="12" fill="url(#dSet)"/>
<circle cx="1023" cy="853" r="22.2" fill="#2f3032"/>
<circle cx="1023" cy="853" r="20.4" fill="none" stroke="#b4b6b8" stroke-width="2.4" stroke-dasharray="1.25 1.42"/>
<circle cx="1023" cy="853" r="18.6" fill="#7e8082"/>
<circle cx="1023" cy="853" r="16" fill="#3e3f41"/>
<circle cx="1023" cy="853" r="13" fill="none" stroke="#8a8c8e" stroke-width="2.6"/>
<circle cx="1023" cy="853" r="9.6" fill="#505254"/>
<circle cx="1023" cy="853" r="7" fill="none" stroke="#8a8c8e" stroke-width="1.8"/>
<g stroke="#c2c4c6" stroke-width="2.1" stroke-linecap="round"><path d="M1023 853L1038.5 853"/><path d="M1023 853L1015.2 839.6"/><path d="M1023 853L1015.2 866.4"/></g>
<circle cx="1023" cy="853" r="2.3" fill="#c2c4c6"/>
<!-- Launchpad -->
<rect x="1065" y="827" width="52" height="52" rx="12" fill="#efefef"/>
<g>
<rect x="1073.8" y="836.2" width="9.2" height="9" rx="2.2" fill="#12d332"/><rect x="1086.4" y="836.2" width="9.2" height="9" rx="2.2" fill="#ffc503"/><rect x="1099" y="836.2" width="9.2" height="9" rx="2.2" fill="#ff8a05"/>
<rect x="1073.8" y="848.8" width="9.2" height="9" rx="2.2" fill="#f20d1e"/><rect x="1086.4" y="848.8" width="9.2" height="9" rx="2.2" fill="#a3abb2"/><rect x="1099" y="848.8" width="9.2" height="9" rx="2.2" fill="#ff2e6c"/>
<rect x="1073.8" y="861.4" width="9.2" height="9" rx="2.2" fill="#b233e6"/><rect x="1086.4" y="861.4" width="9.2" height="9" rx="2.2" fill="#06a2ff"/><rect x="1099" y="861.4" width="9.2" height="9" rx="2.2" fill="#06caa2"/>
</g>
<!-- separator -->
<rect x="1140" y="826" width="1" height="59" fill="#8e8e8e"/>
<!-- Trash -->
<path d="M1166.2 830c0-3 10-5 22.6-5s22.6 2 22.6 5l-4.6 48c-.4 3-8 4.4-18 4.400s-17.6-1.4-18-4.400z" fill="url(#dTrash)"/>
<path d="M1176 834l3 47M1188.8 835v47.500M1201.5 834l-3 47" stroke="#fff" stroke-width="3" opacity=".35" fill="none"/>
<ellipse cx="1188.8" cy="830.2" rx="22.4" ry="4.9" fill="#e4e7e9" stroke="#f4f5f6" stroke-width="1.4"/>
<ellipse cx="1188.8" cy="830.8" rx="20" ry="3.5" fill="#cdd1d4"/>
<!-- running dots -->
<circle cx="410.8" cy="890.6" r="1.9" fill="#3c3c3c"/><circle cx="750.8" cy="890.6" r="1.9" fill="#3c3c3c"/>
</svg>
</div>

<svg style="position:absolute;left:552px;top:756px" width="16" height="22" viewBox="0 0 16 22"><path d="M2 1.800v15.600l3.500-3.200 2.800 6.300 3-1.300-2.800-6.200h4.700z" fill="#000" stroke="#fff" stroke-width="1.200" stroke-linejoin="round"/></svg>

</body>
</html>
